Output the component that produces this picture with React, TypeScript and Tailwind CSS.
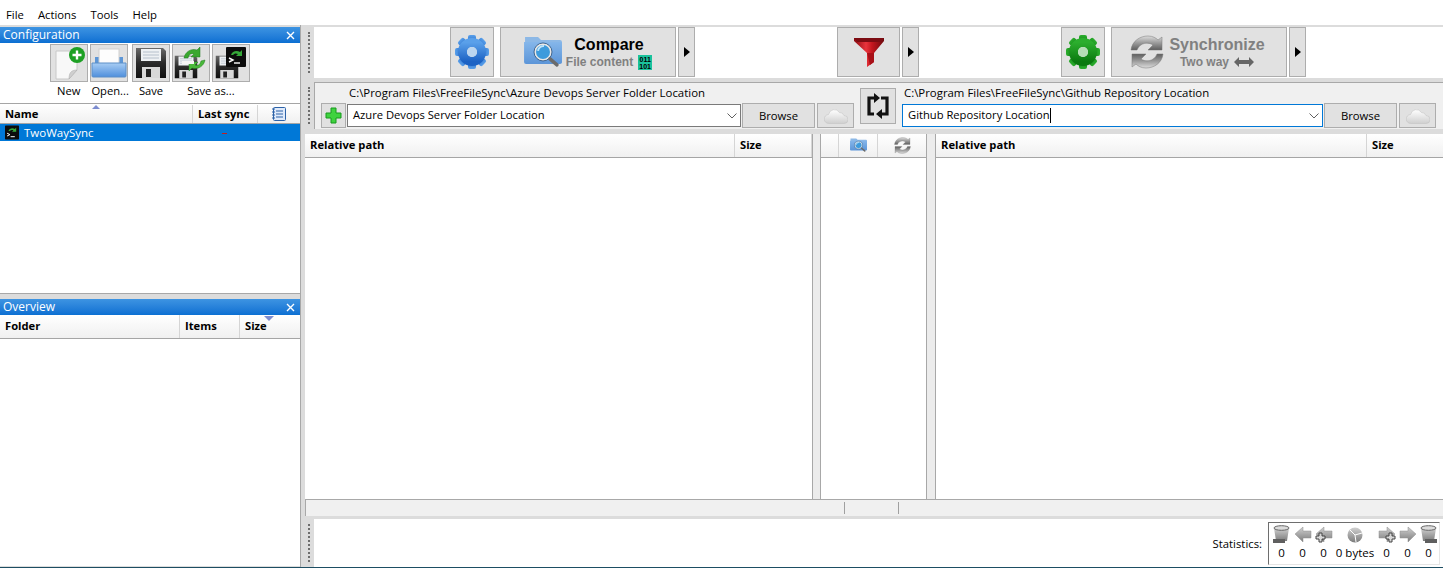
import React from "react";

const SEG = "font-['Open_Sans','Noto_Sans',sans-serif]";

function Gear({ c1, c2, hole, size = 36 }: { c1: string; c2: string; hole: string; size?: number }) {
  const id = "g" + c1.replace("#", "");
  return (
    <svg width={size} height={size} viewBox="0 0 36 36">
      <defs>
        <linearGradient id={id} x1="0" y1="0" x2="0" y2="1">
          <stop offset="0" stopColor={c1} />
          <stop offset="1" stopColor={c2} />
        </linearGradient>
      </defs>
      {[0, 45, 90, 135, 180, 225, 270, 315].map((a) => (
        <rect key={a} x="14" y="1" width="8" height="9" rx="2" fill={`url(#${id})`} transform={`rotate(${a} 18 18)`} />
      ))}
      <circle cx="18" cy="18" r="9.500" fill="none" stroke={`url(#${id})`} strokeWidth="9" />
      <circle cx="18" cy="18" r="5" fill={hole} />
    </svg>
  );
}

function SearchFolder({ size = 38, id = "sf" }: { size?: number; id?: string }) {
  return (
    <svg width={size} height={size * 0.84} viewBox="0 0 38 32">
      <defs>
        <linearGradient id={id} x1="0" y1="0" x2="0" y2="1">
          <stop offset="0" stopColor="#85b6ea" />
          <stop offset="1" stopColor="#5c95d8" />
        </linearGradient>
      </defs>
      <path d="M1 1h13l3 3h19a2 2 0 0 1 2 2v21H1z" fill="#8cb8e6" />
      <path d="M0 6h38v20a2 2 0 0 1-2 2H2a2 2 0 0 1-2-2z" fill={`url(#${id})`} />
      <circle cx="19" cy="16" r="8" fill="#3e9bdc" stroke="#e8e8e8" strokeWidth="2" />
      <circle cx="19" cy="16" r="9" fill="none" stroke="#2a4f78" strokeWidth=".8" />
      <path d="M14 15a5.500 5.500 0 0 1 6-5" stroke="#bfe4fa" strokeWidth="2" fill="none" />
      <path d="M26 23l7 6" stroke="#6b6b6b" strokeWidth="3.500" strokeLinecap="round" />
    </svg>
  );
}

function SyncArrows({ size = 34, id = "sa" }: { size?: number; id?: string }) {
  return (
    <svg width={size} height={size} viewBox="0 0 34 34">
      <defs>
        <linearGradient id={id} x1="0" y1="0" x2="0" y2="1">
          <stop offset="0" stopColor="#dcdcdc" />
          <stop offset=".5" stopColor="#9a9a9a" />
          <stop offset="1" stopColor="#5e5e5e" />
        </linearGradient>
      </defs>
      <path d="M1 15C2 6 10 1 18 1c5 0 8 2 10 4l4-3v13H18l5-5C19 7 10 7 7 15z" fill={`url(#${id})`} stroke="#777" strokeWidth=".5" />
      <path d="M1 15C2 6 10 1 18 1c5 0 8 2 10 4l4-3v13H18l5-5C19 7 10 7 7 15z" fill={`url(#${id})`} stroke="#777" strokeWidth=".5" transform="rotate(180 17 17)" />
    </svg>
  );
}

function Floppy({ size = 32, id }: { size?: number; id: string }) {
  return (
    <>
      <defs>
        <linearGradient id={id} x1="0" y1="0" x2="0" y2="1">
          <stop offset="0" stopColor="#6a6a6a" />
          <stop offset=".5" stopColor="#2a2a2a" />
          <stop offset="1" stopColor="#111" />
        </linearGradient>
      </defs>
      <g transform={`scale(${size / 32})`}>
        <path d="M1 1h27l3 3v27H1z" fill={`url(#${id})`} />
        <rect x="6" y="2" width="20" height="12" fill="#eef1f4" />
        <path d="M8 5h16M8 8h16M8 11h16" stroke="#b6c0cc" strokeWidth="1" />
        <rect x="7" y="20" width="18" height="11" fill="#d8d8d8" />
        <rect x="11" y="22" width="5" height="8" fill="#222" />
      </g>
    </>
  );
}

function TermInner() {
  return (
    <>
      <rect width="20" height="20" rx="1" fill="#0c0c0c" />
      <path d="M5 8c1-4 6-5 9-3l2-2v6h-6l2-2c-2-1-4-.5-5 1z" fill="#35a838" />
      <path d="M3 11l4 2-4 2" stroke="#fff" strokeWidth="1.400" fill="none" />
      <path d="M8 16h6" stroke="#fff" strokeWidth="1.400" />
    </>
  );
}

function ToolBtn({ children }: { children: React.ReactNode }) {
  return (
    <div className="w-[38px] h-[38px] bg-[#e1e1e1] border border-[#adadad] flex items-center justify-center">
      {children}
    </div>
  );
}

function BigBtn({ w, children }: { w: string; children: React.ReactNode }) {
  return <div className={`${w} h-[50px] bg-[#e1e1e1] border border-[#adadad] flex items-center justify-center shrink-0`}>{children}</div>;
}

function ArrowBtn() {
  return (
    <div className="w-[17px] h-[50px] bg-[#e1e1e1] border border-[#adadad] flex items-center justify-center shrink-0 ml-[2px]">
      <svg width="6" height="10" viewBox="0 0 6 10"><path d="M0 0l6 5-6 5z" fill="#000" /></svg>
    </div>
  );
}

function Grip() {
  return (
    <div className="w-[9px] self-stretch shrink-0 bg-[#dcdcdc] flex justify-center py-[5px]">
      <div className="w-0 h-full border-l-2 border-dotted border-[#6d6d6d] -translate-x-[1px]" />
    </div>
  );
}

function PanelTitle({ t }: { t: string }) {
  return (
    <div className="h-[16px] shrink-0 bg-gradient-to-b from-[#3d94e2] to-[#0a6fd2] flex items-center justify-between pl-[3px] pr-[5px] text-white text-[12px] leading-none">
      <span>{t}</span>
      <svg width="9" height="9" viewBox="0 0 9 9"><path d="M1 1l7 7M8 1l-7 7" stroke="#fff" strokeWidth="1.400" /></svg>
    </div>
  );
}

function Cloud({ id }: { id: string }) {
  return (
    <svg width="24" height="16" viewBox="0 0 24 16">
      <defs>
        <linearGradient id={id} x1="0" y1="0" x2="0" y2="1">
          <stop offset="0" stopColor="#ffffff" />
          <stop offset="1" stopColor="#cfcfcf" />
        </linearGradient>
      </defs>
      <path d="M5 15.500a4.500 4.500 0 0 1-.5-9 6 6 0 0 1 11-2 4.500 4.500 0 0 1 4.500 3 4 4 0 0 1 0 8z" fill={`url(#${id})`} stroke="#c4c4c4" strokeWidth=".6" />
    </svg>
  );
}

function FolderInput({ text, w, active }: { text: string; w: string; active?: boolean }) {
  return (
    <div className={`${w} h-[23px] bg-white border ${active ? "border-[#0078d7]" : "border-[#7a7a7a]"} flex items-center justify-between pl-[5px] pr-[3px] shrink-0 text-[11.2px] text-black`}>
      <span className="flex items-center">{text}{active && <span className="w-px h-[15px] bg-black" />}</span>
      <svg width="10" height="6" viewBox="0 0 10 6"><path d="M.5.500L5 5 9.500.500" stroke="#606060" fill="none" /></svg>
    </div>
  );
}

function SmallBtn({ w, children }: { w: string; children: React.ReactNode }) {
  return <div className={`${w} h-[25px] bg-[#e1e1e1] border border-[#adadad] flex items-center justify-center shrink-0 text-[11.3px] text-black`}>{children}</div>;
}

function ColHead({ w, children, last }: { w: string; children?: React.ReactNode; last?: boolean }) {
  return (
    <div className={`${w} h-full flex items-center pl-[5px] font-bold text-[11.2px] text-black ${last ? "" : "border-r border-[#d5d5d5]"}`}>
      {children}
    </div>
  );
}

const headBg = "bg-gradient-to-b from-white to-[#f0f0f0] border-b border-[#a5a5a5]";

function StatCol({ w, icon, v }: { w: string; icon: React.ReactNode; v: string }) {
  return (
    <div className={`${w} flex flex-col items-center`}>
      <div className="h-[20px] flex items-center">{icon}</div>
      <div className="text-[11.5px] leading-[16px] text-black">{v}</div>
    </div>
  );
}

function StatDefs() {
  return (
    <svg width="0" height="0" className="absolute">
      <defs>
        <linearGradient id="metal" x1="0" y1="0" x2="0" y2="1">
          <stop offset="0" stopColor="#d0d0d0" />
          <stop offset="1" stopColor="#7c7c7c" />
        </linearGradient>
      </defs>
    </svg>
  );
}

function Drum({ flip }: { flip?: boolean }) {
  return (
    <svg width="17" height="19" viewBox="0 0 17 19" style={flip ? { transform: "scaleX(-1)" } : undefined}>
      <path d="M1 3h15l-2 13H3z" fill="url(#metal)" />
      <ellipse cx="8.500" cy="3" rx="7.500" ry="2.300" fill="#dcdcdc" stroke="#666" strokeWidth="1" />
      <rect x="0" y="14" width="12" height="4" fill="#5f5f5f" />
    </svg>
  );
}

function BigArrow({ dir, plus }: { dir: "l" | "r"; plus?: boolean }) {
  return (
    <svg width="18" height="17" viewBox="0 0 18 17" style={dir === "r" ? { transform: "scaleX(-1)" } : undefined}>
      <path d="M1 8l8-7v4h8v7H9v4z" fill="url(#metal)" stroke="#8f8f8f" strokeWidth=".5" />
      {plus && <path d="M2 9h3V6h3v3h3v3H8v3H5v-3H2z" transform="translate(-1 1)" fill="#d8d8d8" stroke="#444" strokeWidth="1" />}
    </svg>
  );
}

export default function App() {
  return (
    <div className={`relative w-[1443px] h-[568px] flex flex-col bg-[#dcdcdc] overflow-hidden text-black ${SEG}`}>
      <StatDefs />
      <div className="h-[25px] shrink-0 bg-white flex items-center pl-[6px] pt-[6px] gap-[14px] text-[11.3px]">
        <span>File</span><span>Actions</span><span>Tools</span><span>Help</span>
      </div>
      <div className="flex-1 flex min-h-0">
        {/* left column */}
        <div className="w-[301px] shrink-0 flex flex-col border-r border-[#a8a8a8]">
          <div className="h-[267px] mt-[2px] bg-white flex flex-col border-b border-[#a8a8a8]">
            <PanelTitle t="Configuration" />
            <div className="h-[60px] shrink-0 flex flex-col">
              <div className="flex pl-[50px] pt-[1px]">
                <ToolBtn>
                  <svg width="34" height="34" viewBox="0 0 34 34">
                    <path d="M4 5h21v19l-8 9H4z" fill="#f8f8f8" stroke="#c8c8c8" />
                    <path d="M17 33c0-6 2-9 8-9z" fill="#cfcfcf" stroke="#aaa" strokeWidth=".5" />
                    <circle cx="25" cy="9" r="8" fill="#1ea024" />
                    <path d="M25 4.500v9M20.500 9h9" stroke="#fff" strokeWidth="2.400" />
                  </svg>
                </ToolBtn>
                <div className="w-[2px]" />
                <ToolBtn>
                  <svg width="36" height="32" viewBox="0 0 36 32">
                    <defs>
                      <linearGradient id="tray" x1="0" y1="0" x2="0" y2="1">
                        <stop offset="0" stopColor="#a8cdf4" />
                        <stop offset="1" stopColor="#4f8fdc" />
                      </linearGradient>
                    </defs>
                    <path d="M4 10h28v10H4z" fill="#5d96d6" />
                    <rect x="8" y="2" width="20" height="18" fill="#fdfdfd" stroke="#d0d0d0" />
                    <path d="M1 16h34v13a1 1 0 0 1-1 1H2a1 1 0 0 1-1-1z" fill="url(#tray)" stroke="#5d8fc8" />
                  </svg>
                </ToolBtn>
                <div className="w-[4px]" />
                <ToolBtn>
                  <svg width="32" height="32" viewBox="0 0 32 32"><Floppy id="f1" /></svg>
                </ToolBtn>
                <div className="w-[2px]" />
                <ToolBtn>
                  <svg width="34" height="34" viewBox="0 0 34 34">
                    <g transform="translate(0 9)"><Floppy id="f2" size={24} /></g>
                    <path d="M10 12c1-6 7-10 13-8l3-3v10h-9l3-3c-3-1-5 0-6 4z" fill="#3aa82f" stroke="#1f7a1c" strokeWidth=".5" />
                    <path d="M31 14c-1 6-7 10-13 8l-3 3V16h9l-3 3c3 1 5 0 6-4z" fill="#49b83a" stroke="#1f7a1c" strokeWidth=".5" />
                    <path d="M8 15h12v3H8z" fill="#f4f4f4" />
                  </svg>
                </ToolBtn>
                <div className="w-[2px]" />
                <ToolBtn>
                  <svg width="34" height="34" viewBox="0 0 34 34">
                    <g transform="translate(1 9)"><Floppy id="f3" size={24} /></g>
                    <g transform="translate(12 1)"><TermInner /></g>
                  </svg>
                </ToolBtn>
              </div>
              <div className="flex-1 flex items-center text-[11.2px] pb-[2px]">
                <span className="ml-[57px]">New</span>
                <span className="ml-[11px]">Open...</span>
                <span className="ml-[10px]">Save</span>
                <span className="ml-[24px]">Save as...</span>
              </div>
            </div>
            <div className={`h-[21px] shrink-0 flex border-t border-[#a5a5a5] pt-[1px] ${headBg} relative`}>
              <ColHead w="w-[193px]">Name</ColHead>
              <ColHead w="w-[65px]">Last sync</ColHead>
              <div className="flex-1 flex items-center justify-center">
                <svg width="16" height="16" viewBox="0 0 16 16">
                  <rect x="2.500" y="1.500" width="12" height="13" rx="1" fill="#dfeafa" stroke="#2c62a8" />
                  <path d="M5 5h7M5 8h7M5 11h7" stroke="#2c62a8" />
                  <path d="M1 3h3M1 6h3M1 9h3M1 12h3" stroke="#2c62a8" />
                </svg>
              </div>
              <span className="absolute left-[92px] top-[1px] w-0 h-0 border-l-[4px] border-r-[4px] border-b-[4px] border-l-transparent border-r-transparent border-b-[#7c8cd0]" />
            </div>
            <div className="h-[17px] shrink-0 bg-[#0078d7] flex items-center text-white text-[11.5px] relative">
              <span className="ml-[5px] mr-[5px] flex">
                <svg width="14" height="15" viewBox="0 0 20 20"><TermInner /></svg>
              </span>
              <span>TwoWaySync</span>
              <span className="absolute left-[222px] top-[9px] w-[5px] h-px bg-[#c02020]" />
            </div>
            <div className="flex-1" />
          </div>
          <div className="flex-1 mt-[5px] bg-white flex flex-col mb-[1px]">
            <PanelTitle t="Overview" />
            <div className={`h-[24px] shrink-0 flex ${headBg} relative`}>
              <ColHead w="w-[180px]">Folder</ColHead>
              <ColHead w="w-[60px]">Items</ColHead>
              <ColHead w="flex-1" last>Size</ColHead>
              <span className="absolute left-[264px] top-[1px] w-0 h-0 border-l-[5px] border-r-[5px] border-t-[5px] border-l-transparent border-r-transparent border-t-[#7c8cd0]" />
            </div>
            <div className="flex-1" />
          </div>
        </div>
        {/* right column */}
        <div className="flex-1 min-w-0 flex flex-col pl-[4px]">
          <div className="h-[51px] shrink-0 mt-[2px] flex">
            <Grip />
            <div className="flex-1 bg-white flex items-start pl-[136px]">
              <BigBtn w="w-[44px]"><Gear c1="#5aa0ea" c2="#1c62c4" hole="#bcd6f0" /></BigBtn>
              <div className="w-[6px]" />
              <BigBtn w="w-[176px]">
                <div className="flex items-center gap-[4px]">
                  <SearchFolder />
                  <div className="flex flex-col items-center pt-[2px]">
                    <span className="text-[16px] leading-[18px] font-bold font-['Liberation_Sans',sans-serif]">Compare</span>
                    <span className="flex items-center gap-[5px] text-[12px] leading-[16px] font-bold text-[#808080] font-['Liberation_Sans',sans-serif]">
                      File content
                      <span className="w-[14px] h-[15px] bg-[#1ac29c] text-[7px] leading-[7px] font-bold text-black text-center pt-[1px]">011<br />101</span>
                    </span>
                  </div>
                </div>
              </BigBtn>
              <ArrowBtn />
              <div className="w-[142px]" />
              <BigBtn w="w-[63px]">
                <svg width="30" height="30" viewBox="0 0 30 30">
                  <defs>
                    <linearGradient id="fn" x1="0" y1="0" x2="1" y2="0">
                      <stop offset="0" stopColor="#8c0a10" />
                      <stop offset=".4" stopColor="#e8343c" />
                      <stop offset=".6" stopColor="#c4161e" />
                      <stop offset="1" stopColor="#6e0a0e" />
                    </linearGradient>
                  </defs>
                  <path d="M0 1h30v3L20 16v9l-7 5V16L0 4z" fill="url(#fn)" />
                  <path d="M0 1h30l-3 4H3z" fill="#7c0c12" />
                  <path d="M13 16h7v9l-4 3z" fill="#a81018" />
                </svg>
              </BigBtn>
              <ArrowBtn />
              <div className="w-[142px]" />
              <BigBtn w="w-[44px]"><Gear c1="#2cae2e" c2="#0b7a10" hole="#b6deb6" /></BigBtn>
              <div className="w-[6px]" />
              <BigBtn w="w-[176px]">
                <div className="flex items-center gap-[5px] pr-[3px]">
                  <SyncArrows />
                  <div className="flex flex-col items-center pt-[2px]">
                    <span className="text-[16px] leading-[18px] font-bold text-[#808080] font-['Liberation_Sans',sans-serif]">Synchronize</span>
                    <span className="flex items-center gap-[5px] text-[12px] leading-[16px] font-bold text-[#808080] font-['Liberation_Sans',sans-serif]">
                      Two way
                      <svg width="20" height="10" viewBox="0 0 20 10"><path d="M0 5l5-5v3h10V0l5 5-5 5V7H5v3z" fill="#666" /></svg>
                    </span>
                  </div>
                </div>
              </BigBtn>
              <ArrowBtn />
            </div>
          </div>
          <div className="h-[47px] shrink-0 mt-[4px] flex">
            <Grip />
            <div className="flex-1 bg-[#f0f0f0] border-t border-l border-[#a8a8a8] flex pl-[6px] pr-[7px]">
              <div className="w-[534px] shrink-0 flex flex-col">
                <div className="h-[20px] pl-[28px] flex items-center text-[11.4px]">C:\Program Files\FreeFileSync\Azure Devops Server Folder Location</div>
                <div className="flex items-center gap-px">
                  <SmallBtn w="w-[25px]">
                    <svg width="17" height="17" viewBox="0 0 17 17"><path d="M6 1h5v5h5v5h-5v5H6v-5H1V6h5z" fill="#3fd23f" stroke="#179a1c" /></svg>
                  </SmallBtn>
                  <FolderInput text="Azure Devops Server Folder Location" w="w-[394px]" />
                  <SmallBtn w="w-[73px]"><span className="pt-[1px]">Browse</span></SmallBtn>
                  <div className="w-0" />
                  <SmallBtn w="w-[37px]"><Cloud id="c1" /></SmallBtn>
                </div>
              </div>
              <div className="w-[36px] ml-[5px] mt-[5px] h-[36px] shrink-0 bg-[#e1e1e1] border border-[#adadad] flex items-center justify-center">
                <svg width="24" height="26" viewBox="0 0 24 26">
                  <path d="M9 5H3v16h5M13 21h8V5h-6" fill="none" stroke="#111" strokeWidth="3.200" />
                  <path d="M8 0l6 5-6 5zM16 16v10l-6-5z" fill="#111" />
                </svg>
              </div>
              <div className="flex-1 flex flex-col ml-[6px]">
                <div className="h-[20px] pl-[2px] flex items-center text-[11.4px]">C:\Program Files\FreeFileSync\Github Repository Location</div>
                <div className="flex items-center gap-px">
                  <FolderInput text="Github Repository Location" w="w-[421px]" active />
                  <SmallBtn w="w-[73px]"><span className="pt-[1px]">Browse</span></SmallBtn>
                  <div className="w-0" />
                  <SmallBtn w="w-[37px]"><Cloud id="c2" /></SmallBtn>
                </div>
              </div>
            </div>
          </div>
          {/* grids */}
          <div className="h-[365px] shrink-0 mt-[5px] flex">
            <div className="w-[507px] bg-white flex flex-col shrink-0">
              <div className={`h-[24px] shrink-0 flex ${headBg}`}>
                <ColHead w="w-[430px]">Relative path</ColHead>
                <ColHead w="flex-1">Size</ColHead>
              </div>
            </div>
            <div className="w-[9px] shrink-0 border-x border-[#a8a8a8] bg-[#ececec]" />
            <div className="w-[105px] bg-white flex flex-col shrink-0">
              <div className={`h-[24px] shrink-0 flex ${headBg}`}>
                <div className="w-[18px] border-r border-[#d5d5d5]" />
                <div className="w-[39px] border-r border-[#d5d5d5] flex items-center justify-center"><SearchFolder size={17} id="sf2" /></div>
                <div className="flex-1 flex items-center justify-center"><SyncArrows size={17} id="sa2" /></div>
              </div>
            </div>
            <div className="w-[10px] shrink-0 border-x border-[#a8a8a8] bg-[#ececec]" />
            <div className="flex-1 bg-white flex flex-col">
              <div className={`h-[24px] shrink-0 flex ${headBg}`}>
                <ColHead w="w-[431px]">Relative path</ColHead>
                <ColHead w="flex-1" last>Size</ColHead>
              </div>
            </div>
          </div>
          <div className="h-[17px] shrink-0 bg-[#f0f0f0] border-t border-l border-[#a8a8a8] flex items-center">
            <div className="w-[539px] h-[12px] border-r border-[#a0a0a0]" />
            <div className="w-[54px] h-[12px] border-r border-[#a0a0a0]" />
          </div>
          <div className="h-[3px] shrink-0" />
          <div className="h-[48px] shrink-0 flex">
            <Grip />
            <div className="flex-1 bg-white flex items-center justify-end pr-[3px] gap-[6px]">
              <span className="text-[11.3px] pt-[2px]">Statistics:</span>
              <div className="w-[172px] h-[43px] border border-[#6e6e6e] border-r-[#e5e5e5] border-b-[#e5e5e5] flex items-start pl-[2px] pt-[2px]">
                <StatCol w="w-[21px]" v="0" icon={<Drum />} />
                <StatCol w="w-[21px]" v="0" icon={<BigArrow dir="l" />} />
                <StatCol w="w-[21px]" v="0" icon={<BigArrow dir="l" plus />} />
                <StatCol w="w-[42px]" v="0 bytes" icon={
                  <svg width="16" height="16" viewBox="0 0 16 16"><circle cx="8" cy="8" r="7.500" fill="url(#metal)" /><path d="M8 8l7-2M8 8L3 3M8 8l1 7" stroke="#fff" /></svg>
                } />
                <StatCol w="w-[21px]" v="0" icon={<BigArrow dir="r" plus />} />
                <StatCol w="w-[21px]" v="0" icon={<BigArrow dir="r" />} />
                <StatCol w="w-[21px]" v="0" icon={<Drum flip />} />
              </div>
            </div>
          </div>
        </div>
      </div>
      <div className="h-px shrink-0 bg-[#1d4e63]" />
    </div>
  );
}
